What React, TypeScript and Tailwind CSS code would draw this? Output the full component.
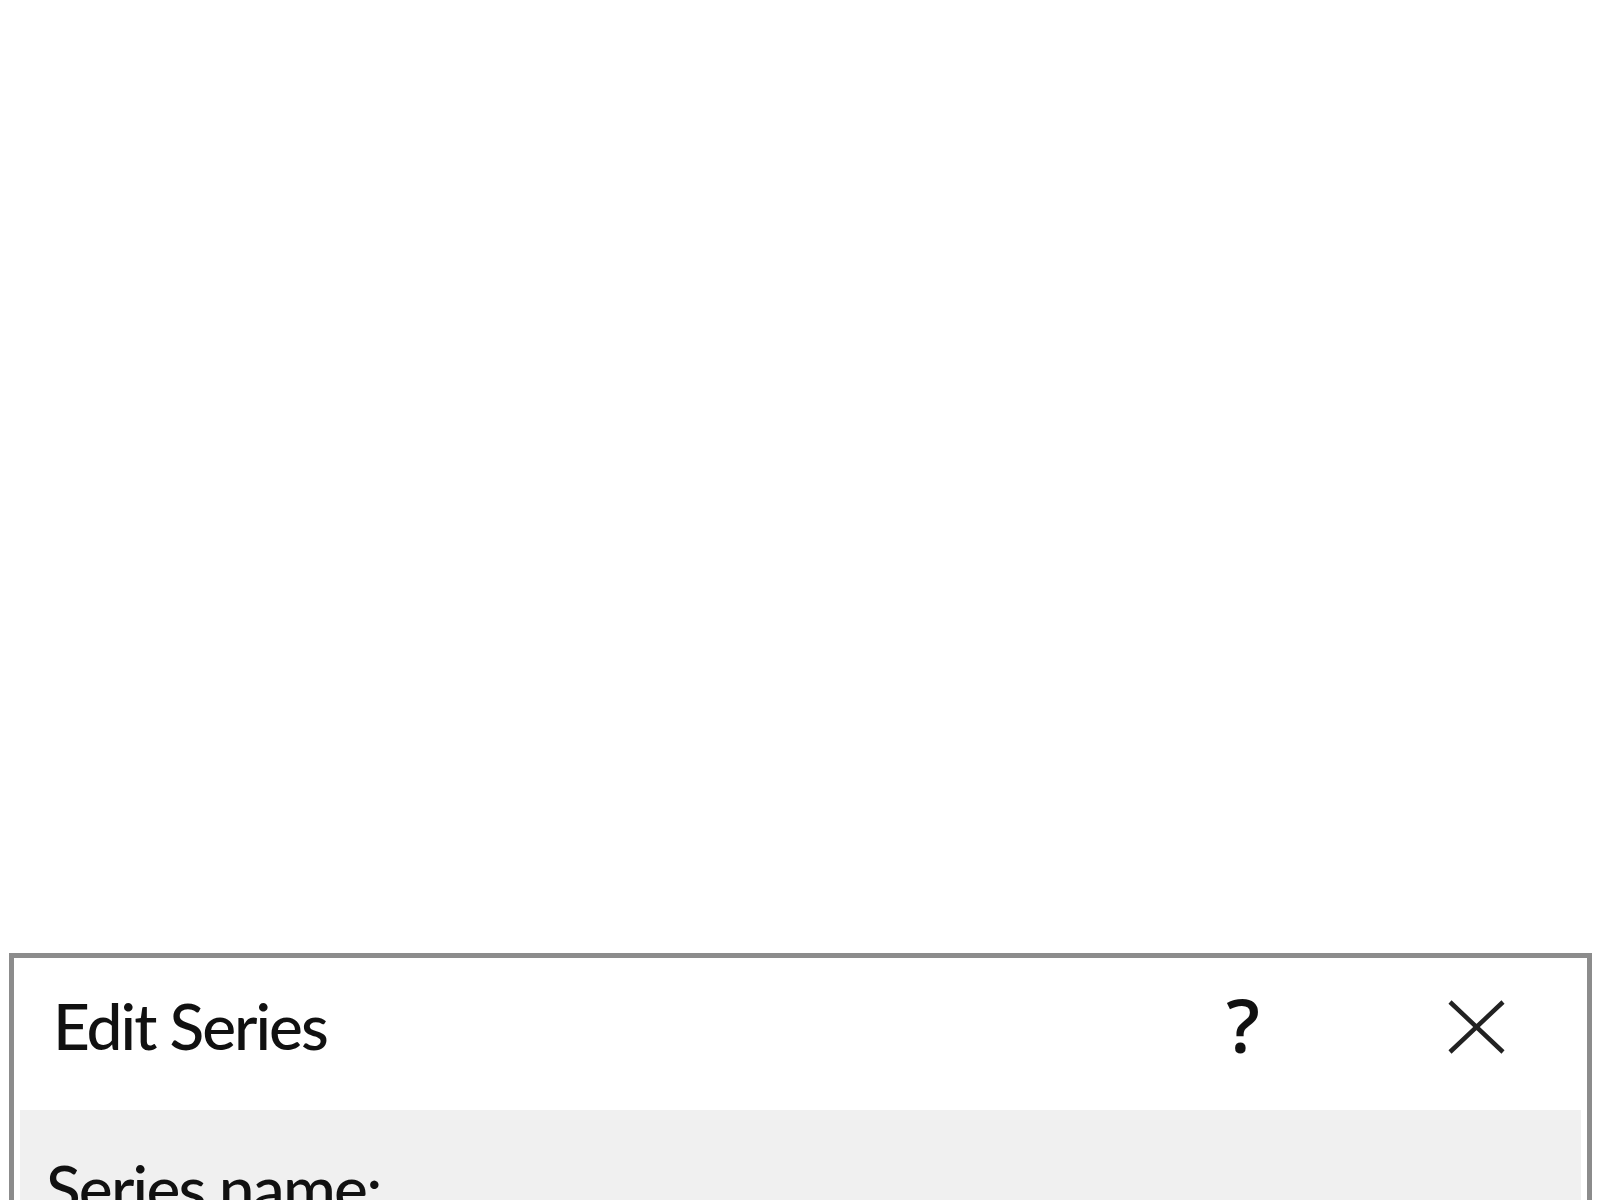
export default function App() {
  return (
    <div className="flex h-[1200px] w-[1600px] flex-col overflow-hidden bg-white pt-[953px] font-['Lato','Noto_Sans',sans-serif] text-[#111]">
      <div className="ml-[9px] mr-[8px] flex flex-1 flex-col border-x-[5px] border-t-[5px] border-[#8c8c8c] bg-white">
        <div className="flex h-[152px] flex-none items-center pl-[39px]">
          <span className="-mt-[16px] text-[64px] font-medium leading-none tracking-[-2px]">Edit Series</span>
          <span className="-mt-[18px] ml-auto mr-[327px] font-['Open_Sans',sans-serif] text-[74px] font-semibold leading-none">?</span>
        </div>
        <div className="absolute left-[1448px] top-[1000px] h-[54px] w-[57px]">
          <svg width="57" height="54" viewBox="0 0 57 54">
            <path d="M2 2 L55 52 M55 2 L2 52" stroke="#222" strokeWidth="4.5" fill="none" />
          </svg>
        </div>
        <div className="mx-[6px] flex-1 bg-[#f0f0f0] pl-[26px] pt-[46px]">
          <span className="text-[64px] font-medium leading-none tracking-[-1.8px]">Series name:</span>
        </div>
      </div>
    </div>
  );
}
